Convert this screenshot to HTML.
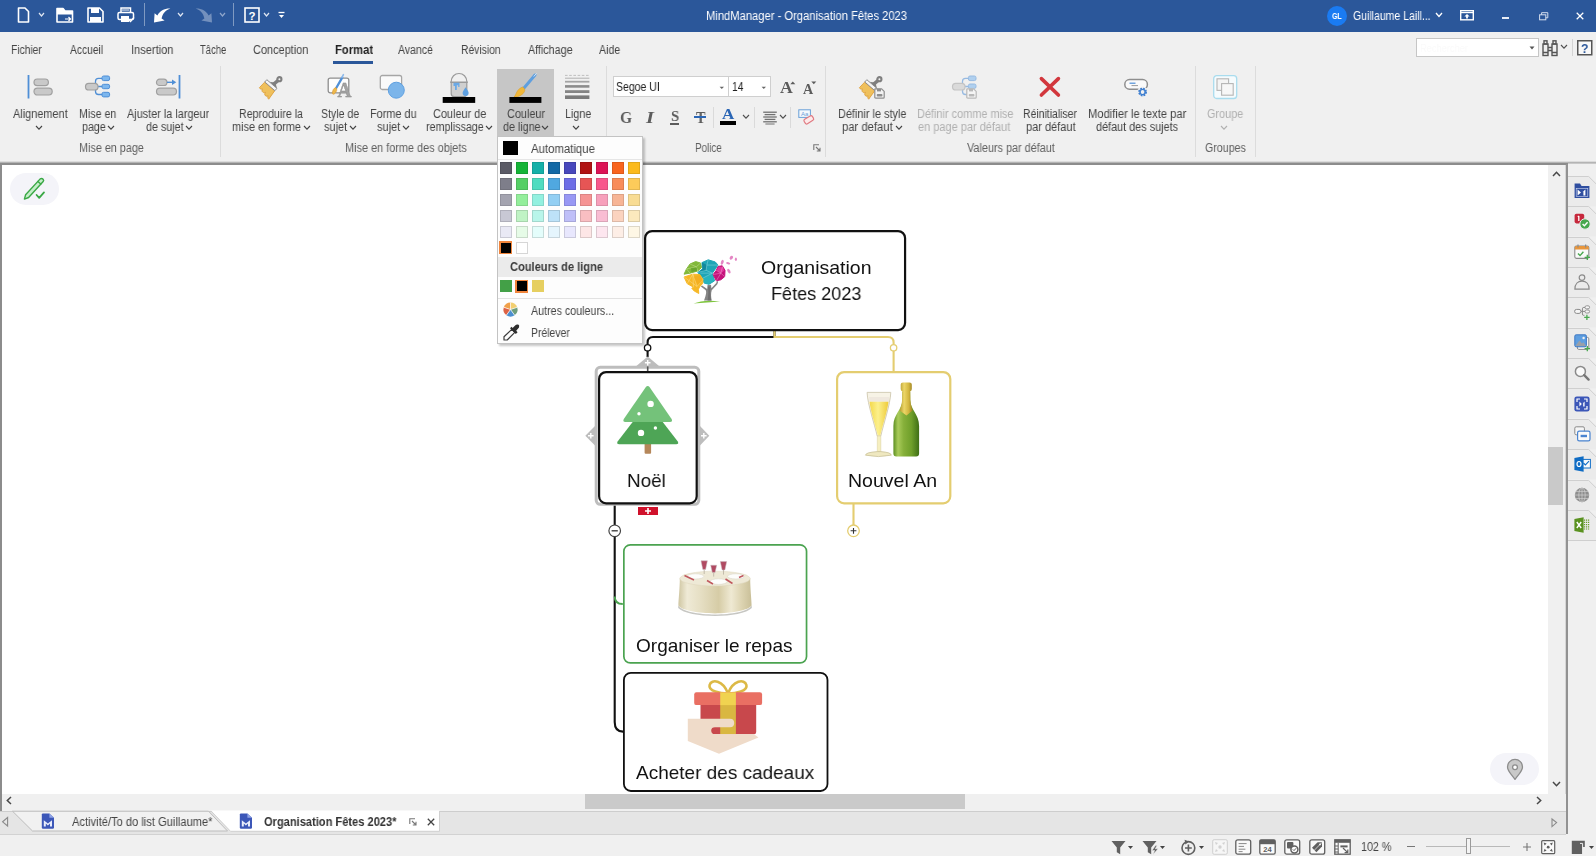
<!DOCTYPE html>
<html lang="fr"><head><meta charset="utf-8"><title>MindManager - Organisation Fêtes 2023</title>
<style>
html,body{margin:0;padding:0;}
body{width:1596px;height:856px;overflow:hidden;position:relative;background:#f0f0f0;font-family:"Liberation Sans",sans-serif;}
.b{position:absolute;box-sizing:border-box;display:block;}
.t{position:absolute;white-space:nowrap;display:block;transform-origin:0 50%;will-change:transform;}
svg{overflow:visible;}
</style></head>
<body>
<!-- title bar -->
<div class="b" style="left:0px;top:0px;width:1596px;height:32.4px;background:#2b579a;"></div>
<svg class="b" style="left:17px;top:7px;" width="13" height="16" viewBox="0 0 13 16"><path d="M1.5 1 H8 L11.5 4.5 V15 H1.5 Z" fill="none" stroke="#fff" stroke-width="1.6" stroke-linejoin="round"/></svg>
<svg class="b" style="left:37.5px;top:11.5px;" width="7" height="5" viewBox="0 0 7 5"><path d="M1 1 L3.5 4 L6 1" fill="none" stroke="#dfe6f2" stroke-width="1.2"/></svg>
<svg class="b" style="left:56px;top:7px;" width="18" height="16" viewBox="0 0 18 16"><path d="M1 1.5 H7 L9 4 H16.5 V15 H1 Z" fill="none" stroke="#fff" stroke-width="1.6" stroke-linejoin="round"/><path d="M1 7.5 H16.5 V4 H9 L7 1.5 H1Z" fill="#fff"/><path d="M9 12 H14.5 M12.5 10 L14.5 12 L12.5 14" stroke="#fff" stroke-width="1.2" fill="none"/></svg>
<svg class="b" style="left:87px;top:7px;" width="17" height="16" viewBox="0 0 17 16"><path d="M1 1 H12.5 L16 4.5 V15 H1 Z" fill="none" stroke="#fff" stroke-width="1.6" stroke-linejoin="round"/><rect x="4" y="1" width="8" height="5" fill="#fff"/><rect x="3" y="10" width="11" height="5" fill="#fff"/></svg>
<svg class="b" style="left:117px;top:7px;" width="18" height="16" viewBox="0 0 18 16"><path d="M4 5.5 V1 H13.5 V5.5" fill="none" stroke="#fff" stroke-width="1.5"/><rect x="1" y="5.5" width="15.5" height="7" rx="1.5" fill="none" stroke="#fff" stroke-width="1.5"/><rect x="4" y="9" width="8" height="6" fill="#fff"/><path d="M5 3 H12" stroke="#fff" stroke-width="1"/><path d="M11.5 12.5 L13.5 14.5 L17 10.5" stroke="#fff" stroke-width="1.5" fill="none"/></svg>
<div class="b" style="left:144px;top:3px;width:1px;height:23px;background:#7f9ac2;"></div>
<svg class="b" style="left:153px;top:7px;" width="18" height="16" viewBox="0 0 18 16"><path d="M1 15.6 L1.6 6.2 L4.4 8.6 C7 3.6 11.4 1.4 17.4 1.6 C12.6 3.2 9.6 6.6 8.6 11.6 L11.6 13.6 Z" fill="#fff"/></svg>
<svg class="b" style="left:177px;top:11.5px;" width="7" height="5" viewBox="0 0 7 5"><path d="M1 1 L3.5 4 L6 1" fill="none" stroke="#dfe6f2" stroke-width="1.2"/></svg>
<svg class="b" style="left:195px;top:7px;" width="18" height="16" viewBox="0 0 18 16"><path d="M17 15.6 L16.4 6.2 L13.6 8.6 C11 3.6 6.6 1.4 0.6 1.6 C5.4 3.2 8.4 6.6 9.4 11.6 L6.4 13.6 Z" fill="#7390bd"/></svg>
<svg class="b" style="left:218.5px;top:11.5px;" width="7" height="5" viewBox="0 0 7 5"><path d="M1 1 L3.5 4 L6 1" fill="none" stroke="#8fa6cb" stroke-width="1.2"/></svg>
<div class="b" style="left:233px;top:3px;width:1px;height:23px;background:#7f9ac2;"></div>
<svg class="b" style="left:244px;top:7px;" width="16" height="16" viewBox="0 0 16 16"><rect x="1" y="1" width="14" height="14" fill="none" stroke="#fff" stroke-width="1.6"/><text x="8" y="12.5" font-size="11.5" font-weight="bold" fill="#fff" text-anchor="middle" font-family="Liberation Sans, sans-serif">?</text></svg>
<svg class="b" style="left:262.5px;top:11.5px;" width="7" height="5" viewBox="0 0 7 5"><path d="M1 1 L3.5 4 L6 1" fill="none" stroke="#dfe6f2" stroke-width="1.2"/></svg>
<svg class="b" style="left:277.5px;top:11px;" width="7" height="8" viewBox="0 0 7 8"><path d="M0.5 1.5 H6.5" stroke="#fff" stroke-width="1.3"/><path d="M1 4 H6 L3.5 7 Z" fill="#fff"/></svg>
<span id="t1" class="t" style="left:706px;top:8.4px;font-size:12px;line-height:17px;color:#fff;font-weight:normal;transform:scaleX(0.9329);">MindManager - Organisation Fêtes 2023</span>
<div class="b" style="left:1327px;top:6px;width:20px;height:20px;background:#1a7bf2;border-radius:50%;"></div>
<span id="t2" class="t" style="left:1332.2px;top:10.4px;font-size:9px;line-height:13px;color:#fff;font-weight:bold;transform:scaleX(0.7760);">GL</span>
<span id="t3" class="t" style="left:1353.3px;top:8.4px;font-size:12px;line-height:17px;color:#fff;font-weight:normal;transform:scaleX(0.8758);">Guillaume Laill...</span>
<svg class="b" style="left:1435px;top:12.25px;" width="8" height="5.5" viewBox="0 0 8 5.5"><path d="M1 1 L4 4.5 L7 1" fill="none" stroke="#fff" stroke-width="1.3"/></svg>
<svg class="b" style="left:1460px;top:9.5px;" width="14" height="10.5" viewBox="0 0 14 10.5"><rect x="0.7" y="0.7" width="12.6" height="9.1" fill="none" stroke="#fff" stroke-width="1.4"/><path d="M0.7 2.6 H13.3" stroke="#fff" stroke-width="1.2"/><path d="M7 4 L9.6 6.6 H7.9 V8.5 H6.1 V6.6 H4.4 Z" fill="#fff"/></svg>
<div class="b" style="left:1502.4px;top:17.3px;width:7px;height:1.3px;background:#e8edf6;"></div>
<svg class="b" style="left:1539px;top:11.5px;" width="9.5" height="8.5" viewBox="0 0 9.5 8.5"><rect x="0.6" y="2.8" width="6.2" height="5" fill="none" stroke="#d5deee" stroke-width="1"/><path d="M2.6 2.8 V0.7 H8.8 V5.8 H6.8" fill="none" stroke="#d5deee" stroke-width="1"/></svg>
<svg class="b" style="left:1576px;top:12px;" width="8" height="8" viewBox="0 0 8 8"><path d="M0.7 0.7 L7.3 7.3 M7.3 0.7 L0.7 7.3" stroke="#fff" stroke-width="1.25"/></svg>
<!-- ribbon tabs -->
<span id="t4" class="t" style="left:11.3px;top:41.9px;font-size:12px;line-height:17px;color:#444;font-weight:normal;transform:scaleX(0.8552);">Fichier</span>
<span id="t5" class="t" style="left:69.7px;top:41.9px;font-size:12px;line-height:17px;color:#444;font-weight:normal;transform:scaleX(0.8556);">Accueil</span>
<span id="t6" class="t" style="left:130.6px;top:41.9px;font-size:12px;line-height:17px;color:#444;font-weight:normal;transform:scaleX(0.9211);">Insertion</span>
<span id="t7" class="t" style="left:199.7px;top:41.9px;font-size:12px;line-height:17px;color:#444;font-weight:normal;transform:scaleX(0.7884);">Tâche</span>
<span id="t8" class="t" style="left:252.6px;top:41.9px;font-size:12px;line-height:17px;color:#444;font-weight:normal;transform:scaleX(0.9124);">Conception</span>
<span id="t9" class="t" style="left:334.6px;top:41.9px;font-size:12px;line-height:17px;color:#222;font-weight:bold;transform:scaleX(0.9368);">Format</span>
<div class="b" style="left:333.3px;top:61px;width:40.2px;height:2.6px;background:#2b579a;"></div>
<span id="t10" class="t" style="left:398.3px;top:41.9px;font-size:12px;line-height:17px;color:#444;font-weight:normal;transform:scaleX(0.8741);">Avancé</span>
<span id="t11" class="t" style="left:460.7px;top:41.9px;font-size:12px;line-height:17px;color:#444;font-weight:normal;transform:scaleX(0.8603);">Révision</span>
<span id="t12" class="t" style="left:527.9px;top:41.9px;font-size:12px;line-height:17px;color:#444;font-weight:normal;transform:scaleX(0.8951);">Affichage</span>
<span id="t13" class="t" style="left:599.3px;top:41.9px;font-size:12px;line-height:17px;color:#444;font-weight:normal;transform:scaleX(0.8863);">Aide</span>
<div class="b" style="left:1416px;top:37.5px;width:122.5px;height:19.5px;background:#fff;border:1px solid #c6c6c6;"></div>
<span id="t14" class="t" style="left:1420px;top:39.9px;font-size:11.5px;line-height:16px;color:#fafafa;font-weight:normal;transform:scaleX(0.8074);">Rechercher</span>
<svg class="b" style="left:1529px;top:45.5px;" width="6" height="4" viewBox="0 0 6 4"><path d="M0.5 0.5 H5.5 L3 3.5 Z" fill="#555"/></svg>
<svg class="b" style="left:1542px;top:39.5px;" width="16" height="16.5" viewBox="0 0 16 16.5"><g fill="none" stroke="#555" stroke-width="1.4"><rect x="1" y="4" width="5" height="11.5"/><rect x="10" y="4" width="5" height="11.5"/><rect x="2" y="0.8" width="3" height="3.2"/><rect x="11" y="0.8" width="3" height="3.2"/><path d="M6 7.5 H10 M6 10.5 H10 M1 12.5 H6 M10 12.5 H15"/></g></svg>
<svg class="b" style="left:1559.5px;top:43.9px;" width="8" height="5.2" viewBox="0 0 8 5.2"><path d="M1 1 L4 4.2 L7 1" fill="none" stroke="#505050" stroke-width="1.15"/></svg>
<div class="b" style="left:1571.5px;top:39px;width:1px;height:17px;background:#d4d4d4;"></div>
<svg class="b" style="left:1577px;top:40px;" width="15.5" height="15.5" viewBox="0 0 15.5 15.5"><rect x="0.75" y="0.75" width="14" height="14" fill="#f8f8f8" stroke="#555" stroke-width="1.5"/></svg>
<span id="t15" class="t" style="left:1581.2px;top:39.9px;font-size:12.5px;line-height:18px;color:#2b579a;font-weight:bold;transform:scaleX(0.9685);">?</span>
<!-- ribbon body -->
<div class="b" style="left:0px;top:160.6px;width:1596px;height:1.4px;background:#dcdcdc;"></div>
<div class="b" style="left:0px;top:162px;width:1596px;height:1.4px;background:#b4b4b4;"></div>
<div class="b" style="left:0px;top:163.4px;width:1567.8px;height:1.6px;background:#8c8c8c;"></div>
<div class="b" style="left:1567.8px;top:163.4px;width:28.2px;height:1.6px;background:#c8c8c8;"></div>
<div class="b" style="left:220px;top:66px;width:1px;height:91px;background:#dcdcdc;"></div>
<div class="b" style="left:606px;top:66px;width:1px;height:91px;background:#dcdcdc;"></div>
<div class="b" style="left:825px;top:66px;width:1px;height:91px;background:#dcdcdc;"></div>
<div class="b" style="left:1195px;top:66px;width:1px;height:91px;background:#dcdcdc;"></div>
<div class="b" style="left:1255px;top:66px;width:1px;height:91px;background:#dcdcdc;"></div>
<div class="b" style="left:497.3px;top:68.8px;width:56.4px;height:67px;background:#c6c6c6;"></div>
<span id="t16" class="t" style="left:12.5px;top:105.9px;font-size:12px;line-height:17px;color:#444;font-weight:normal;transform:scaleX(0.9110);">Alignement</span>
<svg class="b" style="left:34.8px;top:124.7px;" width="8" height="5.2" viewBox="0 0 8 5.2"><path d="M1 1 L4 4.2 L7 1" fill="none" stroke="#444" stroke-width="1.15"/></svg>
<span id="t17" class="t" style="left:78.7px;top:105.9px;font-size:12px;line-height:17px;color:#444;font-weight:normal;transform:scaleX(0.8874);">Mise en</span>
<span id="t18" class="t" style="left:81.5px;top:119.4px;font-size:12px;line-height:17px;color:#444;font-weight:normal;transform:scaleX(0.8913);">page</span>
<svg class="b" style="left:106.7px;top:125px;" width="8" height="5.2" viewBox="0 0 8 5.2"><path d="M1 1 L4 4.2 L7 1" fill="none" stroke="#444" stroke-width="1.15"/></svg>
<span id="t19" class="t" style="left:127.3px;top:105.9px;font-size:12px;line-height:17px;color:#444;font-weight:normal;transform:scaleX(0.9061);">Ajuster la largeur</span>
<span id="t20" class="t" style="left:146px;top:119.4px;font-size:12px;line-height:17px;color:#444;font-weight:normal;transform:scaleX(0.8922);">de sujet</span>
<svg class="b" style="left:185px;top:125px;" width="8" height="5.2" viewBox="0 0 8 5.2"><path d="M1 1 L4 4.2 L7 1" fill="none" stroke="#444" stroke-width="1.15"/></svg>
<span id="t21" class="t" style="left:78.7px;top:139.9px;font-size:12px;line-height:17px;color:#5e5e5e;font-weight:normal;transform:scaleX(0.9008);">Mise en page</span>
<span id="t22" class="t" style="left:239.3px;top:105.9px;font-size:12px;line-height:17px;color:#444;font-weight:normal;transform:scaleX(0.8883);">Reproduire la</span>
<span id="t23" class="t" style="left:231.8px;top:119.4px;font-size:12px;line-height:17px;color:#444;font-weight:normal;transform:scaleX(0.9075);">mise en forme</span>
<svg class="b" style="left:303px;top:125px;" width="8" height="5.2" viewBox="0 0 8 5.2"><path d="M1 1 L4 4.2 L7 1" fill="none" stroke="#444" stroke-width="1.15"/></svg>
<span id="t24" class="t" style="left:320.8px;top:105.9px;font-size:12px;line-height:17px;color:#444;font-weight:normal;transform:scaleX(0.8810);">Style de</span>
<span id="t25" class="t" style="left:323.8px;top:119.4px;font-size:12px;line-height:17px;color:#444;font-weight:normal;transform:scaleX(0.9148);">sujet</span>
<svg class="b" style="left:348.5px;top:125px;" width="8" height="5.2" viewBox="0 0 8 5.2"><path d="M1 1 L4 4.2 L7 1" fill="none" stroke="#444" stroke-width="1.15"/></svg>
<span id="t26" class="t" style="left:369.7px;top:105.9px;font-size:12px;line-height:17px;color:#444;font-weight:normal;transform:scaleX(0.9073);">Forme du</span>
<span id="t27" class="t" style="left:376.7px;top:119.4px;font-size:12px;line-height:17px;color:#444;font-weight:normal;transform:scaleX(0.9188);">sujet</span>
<svg class="b" style="left:402px;top:125px;" width="8" height="5.2" viewBox="0 0 8 5.2"><path d="M1 1 L4 4.2 L7 1" fill="none" stroke="#444" stroke-width="1.15"/></svg>
<span id="t28" class="t" style="left:432.6px;top:105.9px;font-size:12px;line-height:17px;color:#444;font-weight:normal;transform:scaleX(0.9094);">Couleur de</span>
<span id="t29" class="t" style="left:426.3px;top:119.4px;font-size:12px;line-height:17px;color:#444;font-weight:normal;transform:scaleX(0.8918);">remplissage</span>
<svg class="b" style="left:484.7px;top:125px;" width="8" height="5.2" viewBox="0 0 8 5.2"><path d="M1 1 L4 4.2 L7 1" fill="none" stroke="#444" stroke-width="1.15"/></svg>
<span id="t30" class="t" style="left:506.5px;top:105.9px;font-size:12px;line-height:17px;color:#444;font-weight:normal;transform:scaleX(0.9065);">Couleur</span>
<span id="t31" class="t" style="left:502.8px;top:119.4px;font-size:12px;line-height:17px;color:#444;font-weight:normal;transform:scaleX(0.8942);">de ligne</span>
<svg class="b" style="left:541.3px;top:125px;" width="8" height="5.2" viewBox="0 0 8 5.2"><path d="M1 1 L4 4.2 L7 1" fill="none" stroke="#444" stroke-width="1.15"/></svg>
<span id="t32" class="t" style="left:564.7px;top:105.9px;font-size:12px;line-height:17px;color:#444;font-weight:normal;transform:scaleX(0.8953);">Ligne</span>
<svg class="b" style="left:572.2px;top:124.7px;" width="8" height="5.2" viewBox="0 0 8 5.2"><path d="M1 1 L4 4.2 L7 1" fill="none" stroke="#444" stroke-width="1.15"/></svg>
<span id="t33" class="t" style="left:344.6px;top:139.9px;font-size:12px;line-height:17px;color:#5e5e5e;font-weight:normal;transform:scaleX(0.9085);">Mise en forme des objets</span>
<span id="t34" class="t" style="left:695.2px;top:139.9px;font-size:12px;line-height:17px;color:#5e5e5e;font-weight:normal;transform:scaleX(0.8199);">Police</span>
<span id="t35" class="t" style="left:837.6px;top:105.9px;font-size:12px;line-height:17px;color:#444;font-weight:normal;transform:scaleX(0.9077);">Définir le style</span>
<span id="t36" class="t" style="left:842px;top:119.4px;font-size:12px;line-height:17px;color:#444;font-weight:normal;transform:scaleX(0.9381);">par defaut</span>
<svg class="b" style="left:894.5px;top:125px;" width="8" height="5.2" viewBox="0 0 8 5.2"><path d="M1 1 L4 4.2 L7 1" fill="none" stroke="#444" stroke-width="1.15"/></svg>
<span id="t37" class="t" style="left:916.5px;top:105.9px;font-size:12px;line-height:17px;color:#b0b0b0;font-weight:normal;transform:scaleX(0.9101);">Définir comme mise</span>
<span id="t38" class="t" style="left:917.8px;top:119.4px;font-size:12px;line-height:17px;color:#b0b0b0;font-weight:normal;transform:scaleX(0.9150);">en page par défaut</span>
<span id="t39" class="t" style="left:1023px;top:105.9px;font-size:12px;line-height:17px;color:#444;font-weight:normal;transform:scaleX(0.8705);">Réinitialiser</span>
<span id="t40" class="t" style="left:1025.6px;top:119.4px;font-size:12px;line-height:17px;color:#444;font-weight:normal;transform:scaleX(0.9177);">par défaut</span>
<span id="t41" class="t" style="left:1087.7px;top:105.9px;font-size:12px;line-height:17px;color:#444;font-weight:normal;transform:scaleX(0.9327);">Modifier le texte par</span>
<span id="t42" class="t" style="left:1095.7px;top:119.4px;font-size:12px;line-height:17px;color:#444;font-weight:normal;transform:scaleX(0.9037);">défaut des sujets</span>
<span id="t43" class="t" style="left:967.2px;top:139.9px;font-size:12px;line-height:17px;color:#5e5e5e;font-weight:normal;transform:scaleX(0.9036);">Valeurs par défaut</span>
<span id="t44" class="t" style="left:1206.9px;top:105.9px;font-size:12px;line-height:17px;color:#b0b0b0;font-weight:normal;transform:scaleX(0.9068);">Groupe</span>
<svg class="b" style="left:1220px;top:124.7px;" width="8" height="5.2" viewBox="0 0 8 5.2"><path d="M1 1 L4 4.2 L7 1" fill="none" stroke="#b0b0b0" stroke-width="1.15"/></svg>
<span id="t45" class="t" style="left:1205.4px;top:139.9px;font-size:12px;line-height:17px;color:#5e5e5e;font-weight:normal;transform:scaleX(0.8885);">Groupes</span>
<!-- ribbon icons -->
<svg class="b" style="left:26px;top:73px;" width="30" height="28" viewBox="0 0 30 28"><path d="M2.5 2 V25.5" stroke="#4f8fd6" stroke-width="1.8"/><rect x="8" y="6" width="14.4" height="6.6" rx="3.3" fill="#c9c9c9" stroke="#a0a0a0" stroke-width="1.2"/><rect x="8" y="15.2" width="18.2" height="6.8" rx="3.4" fill="#c9c9c9" stroke="#a0a0a0" stroke-width="1.2"/></svg>
<svg class="b" style="left:84px;top:73px;" width="28" height="28" viewBox="0 0 28 28"><path d="M18 5.3 H14.5 Q11.5 5.3 11.5 8.3 V18.5 Q11.5 21.5 14.5 21.5 H18 M11.5 13.5 H18" fill="none" stroke="#4f8fd6" stroke-width="1.3"/><rect x="1.5" y="10.3" width="12.5" height="6.7" rx="3.3" fill="#c9c9c9" stroke="#a0a0a0" stroke-width="1.2"/><g fill="#7db7ee" stroke="#4f8fd6" stroke-width="1"><rect x="18" y="3" width="7.6" height="4.6" rx="1.6"/><rect x="18" y="11.3" width="7.6" height="4.4" rx="1.6"/><rect x="18" y="19.3" width="7.6" height="4.6" rx="1.6"/></g></svg>
<svg class="b" style="left:154px;top:73px;" width="30" height="28" viewBox="0 0 30 28"><path d="M25.5 2 V25.5" stroke="#4f8fd6" stroke-width="1.8"/><rect x="2.5" y="6.2" width="10.4" height="6.3" rx="3.1" fill="#c9c9c9" stroke="#a0a0a0" stroke-width="1.2"/><rect x="2.5" y="15.2" width="20" height="6.8" rx="3.4" fill="#c9c9c9" stroke="#a0a0a0" stroke-width="1.2"/><path d="M13 9.3 H19" stroke="#4f8fd6" stroke-width="1.4"/><path d="M18 6.6 L22.3 9.3 L18 12 Z" fill="#4f8fd6"/></svg>
<svg class="b" style="left:258.8px;top:74.5px;" width="24" height="25" viewBox="0 0 24 25"><g>
<circle cx="20.4" cy="4.2" r="2.05" fill="none" stroke="#7f7f7f" stroke-width="2.1"/>
<path d="M19 5.5 L14.2 9.6" stroke="#7f7f7f" stroke-width="3.5"/>
<path d="M16.8 9 L18 13.4 L10.4 6.8 L15 7.4Z" fill="#7f7f7f"/>
<path d="M5.6 7.2 L15.6 15.9 L9.7 24.2 C8.7 23.2 8.5 22 9.1 20.8 C7.7 21.6 6.5 21.2 5.9 20 C5.5 19 5.9 18 6.5 17.4 C5.1 18 3.9 17.6 3.3 16.6 C2.7 15.6 3.1 14.6 3.7 14 C2.3 14.4 0.9 14 0.4 12.7 Z" fill="#efc05c" stroke="#dc9f3c" stroke-width="0.9" stroke-linejoin="round"/>
<path d="M7.8 4.7 L17.9 13.4 L15.9 15.7 L5.8 7 Z" fill="#f4f4f4" stroke="#858585" stroke-width="0.9" stroke-linejoin="round"/>
</g></svg>
<svg class="b" style="left:326px;top:73px;" width="28" height="27" viewBox="0 0 28 27"><rect x="2.2" y="5.2" width="20.6" height="14.6" rx="2" fill="#fdfdfd" stroke="#8e8e8e" stroke-width="1.3"/><g transform="translate(11.6 0) scale(0.9 1)"><text x="0" y="23.8" font-family="Liberation Serif, serif" font-size="21.5" font-weight="bold" fill="#a2a2a2" stroke="#8a8a8a" stroke-width="0.4">A</text></g><path d="M16.2 4.6 L10.2 15" stroke="#4f8fd6" stroke-width="2.3" stroke-linecap="round"/><path d="M17.4 1.6 L16 4.4" stroke="#8db9ea" stroke-width="1.6" stroke-linecap="round"/><path d="M9.6 14.6 C11.6 16 10.8 19 8.2 21 C6.8 21.6 6.2 21 6.4 19.6 C6.6 17.4 7.6 15.2 9.6 14.6Z" fill="#edb84a" stroke="#d8962e" stroke-width="0.6"/></svg>
<svg class="b" style="left:379px;top:73px;" width="28" height="28" viewBox="0 0 28 28"><rect x="1.3" y="2.5" width="21.3" height="14" rx="2" fill="#fafafa" stroke="#a6a6a6" stroke-width="1.3"/><circle cx="17.3" cy="17.2" r="8" fill="#7cb5ea" stroke="#5d9fe0" stroke-width="1"/></svg>
<svg class="b" style="left:442px;top:72px;" width="34" height="32" viewBox="0 0 34 32"><path d="M9 10.5 C9 -1.5 25 -1.5 25 10.5" fill="none" stroke="#9a9a9a" stroke-width="1.2"/>
<path d="M8.2 9.5 H25.8 V10.8 H8.2Z" fill="#9a9a9a"/>
<path d="M9.2 10.5 H24.8 V21.5 Q24.8 24.6 21.8 24.6 H12.2 Q9.2 24.6 9.2 21.5 Z" fill="#cfcfcf" stroke="#9a9a9a" stroke-width="1.2"/>
<path d="M11.5 10.8 H17.5 V15 H16.2 V13.2 H14.8 V18 H13 V14 H11.5 Z" fill="#6aa9e6"/>
<path d="M23.6 15.2 C25.6 18 26.6 19.6 26.6 21 A3 3 0 0 1 20.6 21 C20.6 19.6 21.6 18 23.6 15.2Z" fill="#5d9fe0"/>
<rect x="0.7" y="25" width="32.5" height="5.9" fill="#000"/></svg>
<svg class="b" style="left:508px;top:72px;" width="36" height="32" viewBox="0 0 36 32"><path d="M27 3 L15.8 16.3" stroke="#5f9fdf" stroke-width="3" stroke-linecap="round"/>
<path d="M26 4.2 L28.3 1.6" stroke="#cfe3f7" stroke-width="1" stroke-linecap="round"/>
<path d="M14.6 15 C17.6 16.6 17.6 19.6 14 22.5 C11 24.8 7.5 25.3 6 25 C8.6 22.6 8 17.5 14.6 15Z" fill="#f0b73a" stroke="#d99a23" stroke-width="0.5"/>
<rect x="1.4" y="25" width="32" height="5.9" fill="#000"/></svg>
<svg class="b" style="left:564px;top:73px;" width="27" height="28" viewBox="0 0 27 28"><path d="M1 2.4 H25.4" stroke="#b9b9b9" stroke-width="0.9" stroke-dasharray="2.6 1.6"/><path d="M1 5.2 H25.4" stroke="#b0b0b0" stroke-width="1"/><path d="M1 8.7 H25.4" stroke="#a4a4a4" stroke-width="1.8"/><path d="M1 13.4 H25.4" stroke="#8c8c8c" stroke-width="2.6"/><path d="M1 18.6 H25.4" stroke="#858585" stroke-width="2.8"/><path d="M1 24.2 H25.4" stroke="#7b7b7b" stroke-width="3.6"/></svg>
<div class="b" style="left:613px;top:76px;width:115.5px;height:20.5px;background:#fff;border:1px solid #cfcfcf;"></div>
<span id="t46" class="t" style="left:615.6px;top:79.4px;font-size:12px;line-height:17px;color:#222;font-weight:normal;transform:scaleX(0.8752);">Segoe UI</span>
<svg class="b" style="left:719px;top:85.5px;" width="6" height="4" viewBox="0 0 6 4"><path d="M0.6 0.7 H5 L2.8 3.1 Z" fill="#666"/></svg>
<div class="b" style="left:728.2px;top:76px;width:43px;height:20.5px;background:#fff;border:1px solid #cfcfcf;"></div>
<span id="t47" class="t" style="left:731.6px;top:79.4px;font-size:12px;line-height:17px;color:#222;font-weight:normal;transform:scaleX(0.8533);">14</span>
<svg class="b" style="left:761.2px;top:85.5px;" width="6" height="4" viewBox="0 0 6 4"><path d="M0.6 0.7 H5 L2.8 3.1 Z" fill="#666"/></svg>
<span id="t48" class="t" style="left:780.2px;top:76.2px;font-size:17px;line-height:24px;color:#5c5c5c;font-weight:bold;transform:scaleX(1.0422);font-family:'Liberation Serif',serif;">A</span>
<svg class="b" style="left:789.8px;top:80.5px;" width="6" height="4" viewBox="0 0 6 4"><path d="M0.3 3.3 H5.3 L2.8 0.5 Z" fill="#5c5c5c"/></svg>
<span id="t49" class="t" style="left:802.8px;top:80.2px;font-size:14px;line-height:20px;color:#5c5c5c;font-weight:bold;transform:scaleX(1.0074);font-family:'Liberation Serif',serif;">A</span>
<svg class="b" style="left:811.2px;top:80.5px;" width="6" height="4" viewBox="0 0 6 4"><path d="M0.3 0.5 H5.3 L2.8 3.3 Z" fill="#5c5c5c"/></svg>
<span id="t50" class="t" style="left:619.9px;top:105.4px;font-size:17.5px;line-height:24px;color:#5c5c5c;font-weight:bold;transform:scaleX(0.8881);font-family:'Liberation Serif',serif;">G</span>
<span id="t51" class="t" style="left:645.6px;top:105.4px;font-size:17.5px;line-height:24px;color:#5c5c5c;font-weight:bold;transform:scaleX(1.1743);font-family:'Liberation Serif',serif;font-style:italic;">I</span>
<span id="t52" class="t" style="left:670.6px;top:105.2px;font-size:15.5px;line-height:22px;color:#5c5c5c;font-weight:bold;transform:scaleX(0.9507);font-family:'Liberation Serif',serif;">S</span>
<div class="b" style="left:670.3px;top:123.2px;width:8.8px;height:1.6px;background:#5c5c5c;"></div>
<span id="t53" class="t" style="left:695.6px;top:105.9px;font-size:16.5px;line-height:23px;color:#5c5c5c;font-weight:bold;transform:scaleX(0.8533);font-family:'Liberation Serif',serif;">T</span>
<div class="b" style="left:694.3px;top:116.3px;width:11.8px;height:1.5px;background:#2b66b5;"></div>
<div class="b" style="left:713.3px;top:106.5px;width:1px;height:21.5px;background:#dadada;"></div>
<span id="t54" class="t" style="left:722.4px;top:103.2px;font-size:15.5px;line-height:22px;color:#2b66b5;font-weight:bold;transform:scaleX(1.0979);font-family:'Liberation Serif',serif;">A</span>
<div class="b" style="left:720.3px;top:121.3px;width:16px;height:3.9px;background:#000;"></div>
<svg class="b" style="left:741.8px;top:113.8px;" width="8" height="5.2" viewBox="0 0 8 5.2"><path d="M1 1 L4 4.2 L7 1" fill="none" stroke="#505050" stroke-width="1.15"/></svg>
<div class="b" style="left:754.3px;top:106.5px;width:1px;height:21.5px;background:#dadada;"></div>
<svg class="b" style="left:762px;top:111px;" width="16" height="14" viewBox="0 0 16 14"><g stroke="#707070" stroke-width="1.3"><path d="M1.2 1.2 H14.8"/><path d="M2.6 3.6 H13.4"/><path d="M1.2 6 H14.8"/><path d="M2.6 8.4 H13.4"/><path d="M1.2 10.8 H14.8"/><path d="M3.4 13 H12.6" stroke-width="1"/></g></svg>
<svg class="b" style="left:778.7px;top:113.8px;" width="8" height="5.2" viewBox="0 0 8 5.2"><path d="M1 1 L4 4.2 L7 1" fill="none" stroke="#505050" stroke-width="1.15"/></svg>
<div class="b" style="left:790.3px;top:106.5px;width:1px;height:21.5px;background:#dadada;"></div>
<svg class="b" style="left:797.5px;top:109px;" width="17" height="16" viewBox="0 0 17 16"><rect x="0.8" y="0.8" width="11.6" height="7.6" fill="#f4f8fc" stroke="#6aa0d8" stroke-width="1"/><text x="6.6" y="6.9" font-size="6" fill="#6aa0d8" text-anchor="middle" font-family="Liberation Sans, sans-serif">Aa</text><rect x="6" y="8.2" width="9.6" height="5.2" rx="1.6" transform="rotate(-32 10.8 10.8)" fill="#fdeaea" stroke="#e07a82" stroke-width="1.2"/></svg>
<svg class="b" style="left:812.8px;top:143.8px;" width="8" height="8" viewBox="0 0 8 8"><path d="M0.8 6 V0.8 H6" fill="none" stroke="#777" stroke-width="1.1"/><path d="M3 3 L7 7 M7 3.8 V7 H3.8" fill="none" stroke="#777" stroke-width="1.1"/></svg>
<svg class="b" style="left:859.4px;top:74.5px;" width="24" height="25" viewBox="0 0 24 25"><g>
<circle cx="20.4" cy="4.2" r="2.05" fill="none" stroke="#7f7f7f" stroke-width="2.1"/>
<path d="M19 5.5 L14.2 9.6" stroke="#7f7f7f" stroke-width="3.5"/>
<path d="M16.8 9 L18 13.4 L10.4 6.8 L15 7.4Z" fill="#7f7f7f"/>
<path d="M5.6 7.2 L15.6 15.9 L9.7 24.2 C8.7 23.2 8.5 22 9.1 20.8 C7.7 21.6 6.5 21.2 5.9 20 C5.5 19 5.9 18 6.5 17.4 C5.1 18 3.9 17.6 3.3 16.6 C2.7 15.6 3.1 14.6 3.7 14 C2.3 14.4 0.9 14 0.4 12.7 Z" fill="#efc05c" stroke="#dc9f3c" stroke-width="0.9" stroke-linejoin="round"/>
<path d="M7.8 4.7 L17.9 13.4 L15.9 15.7 L5.8 7 Z" fill="#f4f4f4" stroke="#858585" stroke-width="0.9" stroke-linejoin="round"/>
</g></svg>
<svg class="b" style="left:873.6px;top:88.2px;" width="11" height="11" viewBox="0 0 11 11"><path d="M1.2 0.8 H7.6 L10.2 3.4 V9.2 Q10.2 10.2 9.2 10.2 H1.8 Q0.8 10.2 0.8 9.2 V1.2 Z" fill="#f2f2f2" stroke="#8e8e8e" stroke-width="1.2"/><rect x="3" y="0.8" width="4" height="2.6" fill="#8e8e8e"/><rect x="2.8" y="6" width="5.6" height="2.6" rx="0.8" fill="#8e8e8e"/></svg>
<svg class="b" style="left:951px;top:73px;" width="28" height="28" viewBox="0 0 28 28"><g opacity="0.55"><path d="M18 5.3 H14.5 Q11.5 5.3 11.5 8.3 V18.5 Q11.5 21.5 14.5 21.5 H16 M11.5 13.5 H18" fill="none" stroke="#4f8fd6" stroke-width="1.3"/><rect x="1.5" y="10.3" width="12.5" height="6.7" rx="3.3" fill="#c9c9c9" stroke="#a0a0a0" stroke-width="1.2"/><g fill="#7db7ee" stroke="#4f8fd6" stroke-width="1"><rect x="17.4" y="3" width="7.6" height="4.6" rx="1.6"/><rect x="17.4" y="11" width="7.6" height="4.4" rx="1.6"/></g></g></svg>
<svg class="b" style="left:965.6px;top:88.2px;" width="11" height="11" viewBox="0 0 11 11"><path d="M1.2 0.8 H7.6 L10.2 3.4 V9.2 Q10.2 10.2 9.2 10.2 H1.8 Q0.8 10.2 0.8 9.2 V1.2 Z" fill="#f4f4f4" stroke="#b9b9b9" stroke-width="1.2"/><rect x="3" y="0.8" width="4" height="2.6" fill="#b9b9b9"/><rect x="2.8" y="6" width="5.6" height="2.6" rx="0.8" fill="#b9b9b9"/></svg>
<svg class="b" style="left:1038px;top:75px;" width="24" height="24" viewBox="0 0 24 24"><path d="M3.4 3.6 L20.4 20 M20.4 3.6 L3.4 20" stroke="#d2373d" stroke-width="3.6" stroke-linecap="round"/></svg>
<svg class="b" style="left:1123px;top:77px;" width="28" height="22" viewBox="0 0 28 22"><rect x="1.8" y="2.6" width="22.6" height="9.6" rx="4.8" fill="#fafafa" stroke="#8e8e8e" stroke-width="1.5"/><path d="M6.5 6.2 H12.5" stroke="#4f8fd6" stroke-width="1.2"/><path d="M8.5 8.6 H15" stroke="#9a9a9a" stroke-width="1"/><circle cx="19.6" cy="15" r="5.4" fill="#f0f0f0"/><circle cx="19.6" cy="15" r="3.3" fill="none" stroke="#3f7fd0" stroke-width="2.2" stroke-dasharray="1.6 1"/><circle cx="19.6" cy="15" r="2.6" fill="none" stroke="#3f7fd0" stroke-width="1.4"/></svg>
<svg class="b" style="left:1213px;top:74.6px;" width="24.4" height="24.2" viewBox="0 0 24.4 24.2"><rect x="0.7" y="0.7" width="23" height="22.8" rx="3" fill="#f6fbfd" stroke="#a9dcee" stroke-width="1.3"/><rect x="4" y="3.8" width="11.6" height="11.6" fill="#f4f4f4" stroke="#b5b5b5" stroke-width="1.1"/><rect x="8.6" y="8.6" width="11.6" height="11.6" fill="#f7f7f7" stroke="#b5b5b5" stroke-width="1.1"/></svg>
<!-- canvas -->
<div class="b" style="left:0px;top:165px;width:1568px;height:646px;background:#fff;"></div>
<div class="b" style="left:0px;top:164px;width:1.7px;height:647px;background:#8c8c8c;"></div>
<div class="b" style="left:1547.7px;top:165px;width:17.8px;height:629px;background:#f0f0f0;"></div>
<div class="b" style="left:1565px;top:165px;width:1px;height:669px;background:#d6d6d6;"></div>
<div class="b" style="left:1566px;top:164px;width:2px;height:670px;background:#929292;"></div>
<svg class="b" style="left:1551.5px;top:170.5px;" width="9" height="6" viewBox="0 0 9 6"><path d="M1 5 L4.5 1.3 L8 5" fill="none" stroke="#484848" stroke-width="1.5"/></svg>
<svg class="b" style="left:1551.5px;top:780.5px;" width="9" height="6" viewBox="0 0 9 6"><path d="M1 1 L4.5 4.7 L8 1" fill="none" stroke="#484848" stroke-width="1.5"/></svg>
<div class="b" style="left:1548.2px;top:447px;width:15px;height:57.6px;background:#c9c9c9;"></div>
<div class="b" style="left:1.7px;top:793.6px;width:1564px;height:17.6px;background:#f0f0f0;"></div>
<svg class="b" style="left:5.5px;top:796px;" width="6" height="9" viewBox="0 0 6 9"><path d="M5 1 L1.3 4.5 L5 8" fill="none" stroke="#484848" stroke-width="1.5"/></svg>
<svg class="b" style="left:1535.5px;top:796px;" width="6" height="9" viewBox="0 0 6 9"><path d="M1 1 L4.7 4.5 L1 8" fill="none" stroke="#484848" stroke-width="1.5"/></svg>
<div class="b" style="left:585px;top:793.8px;width:379.5px;height:15px;background:#cacaca;"></div>
<div class="b" style="left:9.8px;top:173.2px;width:49.4px;height:31.8px;background:#f4f4f9;border-radius:15.9px;"></div>
<svg class="b" style="left:23px;top:178px;" width="24" height="24" viewBox="0 0 24 24"><g fill="none" stroke="#3aa845" stroke-width="1.4" stroke-linejoin="round" stroke-linecap="round"><path d="M17.2 0.9 Q18.9 0 20.1 1.3 Q21.2 2.6 20.2 3.5 L5.6 19.5 L1.4 21.1 L2.6 16.8 Z" fill="#c4eec9"/><path d="M14.9 3.4 L17.8 6"/><path d="M13.6 17 L16.2 19.8 L21 14.4" stroke-width="1.8"/></g></svg>
<div class="b" style="left:1490.3px;top:753.4px;width:48.9px;height:31.7px;background:#f4f4f9;border-radius:15.9px;"></div>
<svg class="b" style="left:1506px;top:757.6px;" width="18" height="23" viewBox="0 0 18 23"><path d="M9 1.4 A7.5 7.5 0 0 1 16.5 8.9 C16.5 13.2 12 16.8 9 21.4 C6 16.8 1.5 13.2 1.5 8.9 A7.5 7.5 0 0 1 9 1.4Z" fill="#c9c9c9" stroke="#8d8d8d" stroke-width="1.3" stroke-linejoin="round"/><circle cx="9" cy="9.3" r="2.4" fill="#fff" stroke="#8d8d8d" stroke-width="1.3"/></svg>
<svg class="b" style="left:560px;top:320px;" width="420" height="480" viewBox="0 0 420 480">
<g fill="none" stroke-width="2.1">
<path d="M214.5 10 V17 H93 Q87.6 17 87.6 22.5 V24.5" stroke="#111"/>
<path d="M214.5 10 V17 H328 Q333.6 17 333.6 22.5 V24.5" stroke="#e4cd70"/>
<path d="M333.6 31 V51" stroke="#e4cd70"/>
<path d="M87.6 31 V37" stroke="#111"/>
<path d="M293.5 183 V205" stroke="#e4cd70"/>
<path d="M54.7 184 V402 Q54.7 411.6 63 411.6" stroke="#111"/>
<path d="M54.7 276.5 Q54.7 284 62.8 284" stroke="#4ba350" stroke-width="1.9"/>
</g>
<circle cx="87.6" cy="27.8" r="3.2" fill="#fff" stroke="#111" stroke-width="1.3"/>
<circle cx="333.6" cy="27.8" r="3.2" fill="#fff" stroke="#e4cd70" stroke-width="1.3"/>
<circle cx="54.7" cy="210.8" r="5.8" fill="#fff" stroke="#444" stroke-width="1.2"/>
<path d="M51.6 210.8 H57.8" stroke="#333" stroke-width="1.3"/>
<circle cx="293.5" cy="210.8" r="5.8" fill="#fff" stroke="#e4cd70" stroke-width="1.3"/>
<path d="M290.6 210.8 H296.4 M293.5 207.9 V213.7" stroke="#333" stroke-width="1.1"/>
</svg>
<svg class="b" style="left:643.6px;top:230px;" width="262.2" height="101.2" viewBox="0 0 262.2 101.2"><rect x="1.1" y="1.1" width="260" height="99" rx="7" fill="#fff" stroke="#111" stroke-width="2.2"/></svg>
<span id="t55" class="t" style="left:760.8px;top:254px;font-size:19px;line-height:27px;color:#111;font-weight:normal;transform:scaleX(1.0257);">Organisation</span>
<span id="t56" class="t" style="left:770.9px;top:280.2px;font-size:19px;line-height:27px;color:#111;font-weight:normal;transform:scaleX(0.9508);">Fêtes 2023</span>
<svg class="b" style="left:676px;top:250px;" width="70" height="60" viewBox="0 0 999 856">
<path d="M250 765 Q400 700 630 735 Q450 745 250 765Z" fill="#7fc63f"/>
<path d="M400 720 C430 640 440 590 420 570 L355 520 L372 505 L445 555 L450 500 L500 495 L505 545 L575 470 L585 440 L602 452 L590 490 L510 575 C495 620 500 680 510 720 Z" fill="#858585"/>
<path d="M450 720 C465 640 465 590 455 520 L490 520 C485 600 490 680 505 720Z" fill="#6f6f6f"/>
<path d="M115 345 L150 270 L200 200 L280 165 L350 185 L365 250 L310 300 L200 330 Z" fill="#82b83a" stroke="#82b83a" stroke-width="14" stroke-linejoin="round"/>
<path d="M200 200 L290 240 L350 185 M290 240 L310 300 M150 270 L290 240 M150 270 L200 330" stroke="#c9e59a" stroke-width="7" fill="none"/>
<path d="M215 255 L300 250 L300 300 L220 315Z" fill="#5f9d2b" opacity="0.7"/>
<path d="M370 180 L460 140 L560 170 L600 215 L520 330 L550 440 L470 490 L400 470 L385 400 L310 320 L380 270 Z" fill="#1fa5b6" stroke="#1fa5b6" stroke-width="14" stroke-linejoin="round"/>
<path d="M370 180 L440 215 L430 290 L310 320 L380 270Z" fill="#12889c"/>
<path d="M385 400 L520 330 L550 440 L470 490 L400 470Z" fill="#28b3bd"/>
<path d="M460 140 L440 215 L600 215 M440 215 L430 290 L520 330 M430 290 L310 320 M385 400 L520 330 M350 330 L520 330" stroke="#a4e4ea" stroke-width="6" fill="none"/>
<path d="M115 385 L240 345 L340 350 L385 420 L380 480 L340 520 L320 560 L325 620 L260 585 L225 545 L250 530 L160 480 Z" fill="#f6b827" stroke="#f6b827" stroke-width="14" stroke-linejoin="round"/>
<path d="M240 345 L300 520 L385 420 M240 345 L160 480 M115 385 L300 520 M240 345 L250 530" stroke="#fde2a0" stroke-width="6" fill="none"/>
<path d="M255 380 L340 355 L380 430 L310 500Z" fill="#f2a81c" opacity="0.6"/>
<path d="M600 235 L660 225 L700 290 L695 380 L640 425 L575 440 L530 350 L575 290 Z" fill="#c5117a" stroke="#c5117a" stroke-width="14" stroke-linejoin="round"/>
<path d="M600 245 L665 235 L690 295 L640 330 L585 290Z" fill="#e0359a"/>
<path d="M665 235 L640 330 L695 380 M640 330 L575 440 M575 290 L640 330 M530 350 L640 330" stroke="#f6a8d8" stroke-width="6" fill="none"/>
<g fill="#e486c4"><ellipse cx="660" cy="175" rx="19" ry="36" transform="rotate(20 660 175)"/><ellipse cx="745" cy="190" rx="30" ry="15" transform="rotate(15 745 190)"/><ellipse cx="790" cy="110" rx="22" ry="30" transform="rotate(35 790 110)"/><ellipse cx="855" cy="132" rx="15" ry="25"/><ellipse cx="755" cy="302" rx="19" ry="36" transform="rotate(-30 755 302)"/></g>
</svg>
<svg class="b" style="left:582px;top:354px;" width="132" height="156" viewBox="0 0 132 156">
<path d="M65.7 2.4 L77.6 12.5 H53.8 Z" fill="#bdbdbd"/>
<path d="M3.3 81.8 L13.5 71.5 V92 Z" fill="#bdbdbd"/>
<path d="M127.3 81.8 L117.5 71.5 V92 Z" fill="#bdbdbd"/>
<rect x="14.2" y="13.3" width="102.6" height="137" rx="4" fill="#fff" stroke="#bdbdbd" stroke-width="3"/>
<g stroke="#fff" stroke-width="1.4"><path d="M62.9 8.7 H68.5 M65.7 5.9 V11.5"/><path d="M6 81.8 H11.6 M8.8 79 V84.6"/><path d="M119 81.8 H124.6 M121.8 79 V84.6"/></g>
<path d="M65.7 12.4 V17" stroke="#555" stroke-width="1.6"/>
</svg>
<svg class="b" style="left:598px;top:370.6px;" width="99.8" height="133.4" viewBox="0 0 99.8 133.4"><rect x="1.1" y="1.1" width="97.6" height="131.2" rx="7" fill="#fff" stroke="#111" stroke-width="2.2"/></svg>
<svg class="b" style="left:612px;top:382px;" width="72" height="76" viewBox="0 0 72 76">
<rect x="32.6" y="58" width="6.5" height="13.7" rx="1" fill="#b5875a"/>
<path d="M35.7 22 Q36.8 22 37.6 23 L65.8 59.5 Q67.2 62.3 64.2 62.3 H7.2 Q4.2 62.3 5.6 59.5 L33.8 23 Q34.6 22 35.7 22Z" fill="#4ea556"/>
<path d="M35.7 4 Q36.8 4 37.5 5 L59.6 37 Q61 40 58 40 H13.4 Q10.4 40 11.8 37 L33.9 5 Q34.6 4 35.7 4Z" fill="#74c27a"/>
<circle cx="38.6" cy="21.9" r="3.2" fill="#fff"/><circle cx="27" cy="31.7" r="1.7" fill="#fff"/><circle cx="29" cy="50.9" r="3.2" fill="#fff"/><circle cx="43.4" cy="46" r="1.7" fill="#fff"/>
</svg>
<span id="t57" class="t" style="left:627.4px;top:467.4px;font-size:19px;line-height:27px;color:#111;font-weight:normal;transform:scaleX(0.9929);">Noël</span>
<div class="b" style="left:638px;top:506.5px;width:19.8px;height:8px;background:#d0112b;"></div>
<svg class="b" style="left:643.9px;top:506.5px;" width="8" height="8" viewBox="0 0 8 8"><path d="M1 4 H7 M4 1 V7" stroke="#fff" stroke-width="1.6"/></svg>
<svg class="b" style="left:836.3px;top:370.6px;" width="115.4" height="133.4" viewBox="0 0 115.4 133.4"><rect x="1.1" y="1.1" width="113.2" height="131.2" rx="7" fill="#fff" stroke="#e4cd70" stroke-width="2.2"/></svg>
<span id="t58" class="t" style="left:848.2px;top:467.4px;font-size:19px;line-height:27px;color:#111;font-weight:normal;transform:scaleX(1.0286);">Nouvel An</span>
<svg class="b" style="left:862px;top:380px;" width="62" height="80" viewBox="0 0 62 80">
<defs>
<linearGradient id="gb" x1="0" x2="1"><stop offset="0" stop-color="#5d8f22"/><stop offset="0.18" stop-color="#a9cb5a"/><stop offset="0.4" stop-color="#86b03a"/><stop offset="0.7" stop-color="#6f9f2a"/><stop offset="1" stop-color="#3f6f16"/></linearGradient>
<linearGradient id="gg" x1="0" x2="1"><stop offset="0" stop-color="#b59a30"/><stop offset="0.35" stop-color="#ecd667"/><stop offset="0.7" stop-color="#d3b640"/><stop offset="1" stop-color="#9a7f22"/></linearGradient>
<linearGradient id="gc" x1="0" x2="1"><stop offset="0" stop-color="#f3d84a"/><stop offset="0.45" stop-color="#fcf08c"/><stop offset="1" stop-color="#eecb3a"/></linearGradient>
</defs>
<path d="M40.3 12 L40.3 20 C40 30 31.4 34 31.4 46 V73.5 Q31.4 76.5 34.4 76.5 H54.1 Q57.1 76.5 57.1 73.5 V46 C57.1 34 48.5 30 48.2 20 V12 Z" fill="url(#gb)"/>
<path d="M38.7 4.4 Q38.7 2.4 41 2.4 H47.5 Q49.8 2.4 49.8 4.4 V9 Q49.8 10.8 48.2 11.4 L48.4 20 C48.6 25 50 28 50.6 30.4 L44.5 35.5 L37.6 30.4 C38.4 28 39.9 25 40.1 20 L40.3 11.4 Q38.7 10.8 38.7 9 Z" fill="url(#gg)"/>
<path d="M5.1 12.4 H28.8 C28.4 24 21.5 44 18.8 56 H15.2 C12.5 44 5.5 24 5.1 12.4Z" fill="#f7f3e6" stroke="#cfc8b0" stroke-width="0.9"/>
<path d="M7 17 H27 V21.8 H7.6Z" fill="#efe8de"/>
<path d="M7.5 21.8 H26.5 C25.2 32 20.4 46 18.2 55.6 H15.8 C13.6 46 8.8 32 7.5 21.8Z" fill="url(#gc)"/>
<path d="M15.3 56 H18.8 V72 H15.3Z" fill="#f6efc0" stroke="#d9cf9a" stroke-width="0.5"/>
<path d="M3.5 75.2 Q3.5 72.4 15.3 71.6 H18.8 Q29.3 72.4 29.3 75.2 Q16.4 78 3.5 75.2Z" fill="#efe8c0" stroke="#c4bb92" stroke-width="0.7"/>
</svg>
<svg class="b" style="left:622.5px;top:544.2px;" width="184.4" height="119.8" viewBox="0 0 184.4 119.8"><rect x="0.85" y="0.85" width="182.7" height="118.1" rx="6.5" fill="#fff" stroke="#4ba350" stroke-width="1.7"/></svg>
<span id="t59" class="t" style="left:635.5px;top:631.8px;font-size:19px;line-height:27px;color:#111;font-weight:normal;transform:scaleX(1.0013);">Organiser le repas</span>
<svg class="b" style="left:676px;top:558px;" width="78" height="60" viewBox="0 0 78 60">
<defs><linearGradient id="gt" x1="0" x2="1"><stop offset="0" stop-color="#cfc6a2"/><stop offset="0.12" stop-color="#efead6"/><stop offset="0.3" stop-color="#e6dfc4"/><stop offset="0.55" stop-color="#d6cca6"/><stop offset="0.72" stop-color="#efe9d3"/><stop offset="0.86" stop-color="#ddd4b2"/><stop offset="1" stop-color="#c9bf98"/></linearGradient></defs>
<path d="M2.2 47.5 C10 59.5 68 59.5 75.8 47.5 L75.8 50 C66 60.5 12 60.5 2.2 50Z" fill="#b9b9b4" opacity="0.8"/>
<path d="M3.8 20.5 C3.8 30 2.4 43 2.4 47.6 C10 58 68 58 75.6 47.6 C75.6 43 74.2 30 74.2 20.5 Z" fill="url(#gt)"/>
<ellipse cx="39" cy="20.6" rx="35.2" ry="7.4" fill="#eee9d6" stroke="#dcd5ba" stroke-width="0.5"/>
<ellipse cx="19.4" cy="18.4" rx="8.4" ry="2.6" fill="#fdfdfb" stroke="#d6d3c6" stroke-width="0.5"/>
<ellipse cx="60" cy="18.4" rx="8.4" ry="2.6" fill="#fdfdfb" stroke="#d6d3c6" stroke-width="0.5"/>
<ellipse cx="42.6" cy="23.6" rx="8.6" ry="2.8" fill="#fdfdfb" stroke="#d6d3c6" stroke-width="0.5"/>
<path d="M8.5 17.5 L18 22 M31 22.5 L37 26 M49.5 21 L56.5 25.5 M63 19.5 L67.5 17.5" stroke="#c0585e" stroke-width="1.5"/>
<g fill="#b04a62" stroke="#c9bfc2" stroke-width="0.5"><path d="M25 2.8 H31.4 L29.6 11.4 H26.8 Z"/><path d="M44.3 3.6 H50.7 L48.9 12 H46.1 Z"/><path d="M34.7 7.2 H40.7 L39.1 14.6 H36.3 Z"/></g>
<g stroke="#bdb6a6" stroke-width="0.9"><path d="M28.2 11.4 V16 M47.5 12 V16.6 M37.7 14.6 V18.6"/></g>
</svg>
<svg class="b" style="left:622.5px;top:671.8px;" width="205.4" height="119.9" viewBox="0 0 205.4 119.9"><rect x="0.9" y="0.9" width="203.6" height="118.1" rx="7" fill="#fff" stroke="#111" stroke-width="1.8"/></svg>
<span id="t60" class="t" style="left:635.5px;top:759.1px;font-size:19px;line-height:27px;color:#111;font-weight:normal;transform:scaleX(0.9982);">Acheter des cadeaux</span>
<svg class="b" style="left:686px;top:677px;" width="80" height="80" viewBox="0 0 80 80">
<g fill="none" stroke="#dcb946" stroke-width="2.6"><path d="M42 16.5 C34 16.5 22 14 23.6 8 C25.4 1.5 37 3 42 16.5Z"/><path d="M42 16.5 C50 16.5 62 14 60.4 8 C58.6 1.5 47 3 42 16.5Z"/></g>
<path d="M14.5 28 H70.2 V55 Q70.2 57.2 68 57.2 H14.5 Z" fill="#c8484c"/>
<path d="M34.2 28 H49.9 V57.2 H34.2Z" fill="#d9b741"/>
<rect x="8.2" y="15.3" width="67.9" height="12.8" rx="2.2" fill="#e96f63"/>
<path d="M34.2 15.3 H49.9 V28.1 H34.2Z" fill="#f0d350"/>
<path d="M1.8 41.7 H44 Q48.2 41.7 48.2 46 Q48.2 50.2 44 50.2 H29 Q25.2 50.2 25.2 53.6 Q25.2 57.2 29 57.2 H68 L72.5 60.5 L33 76.8 L1.8 64 Z" fill="#efdbc9"/>
</svg>
<!-- colour dropdown -->
<div class="b" style="left:497.3px;top:136.2px;width:145.8px;height:208px;background:#fdfdfd;border:1px solid #c3c3c3;box-shadow:2px 2px 2px rgba(0,0,0,0.22);"></div>
<div class="b" style="left:503.3px;top:140.7px;width:14.8px;height:14.6px;background:#000;"></div>
<span id="t61" class="t" style="left:531px;top:140.5px;font-size:12px;line-height:17px;color:#444;font-weight:normal;transform:scaleX(0.9482);">Automatique</span>
<div class="b" style="left:498.3px;top:159.4px;width:143.8px;height:1px;background:#e6e6e6;"></div>
<div class="b" style="left:499.8px;top:162px;width:12px;height:12px;background:#5b5b66;border:1px solid rgba(0,0,0,0.10);"></div>
<div class="b" style="left:515.86px;top:162px;width:12px;height:12px;background:#16b438;border:1px solid rgba(0,0,0,0.10);"></div>
<div class="b" style="left:531.92px;top:162px;width:12px;height:12px;background:#15b0a8;border:1px solid rgba(0,0,0,0.10);"></div>
<div class="b" style="left:547.98px;top:162px;width:12px;height:12px;background:#1469a5;border:1px solid rgba(0,0,0,0.10);"></div>
<div class="b" style="left:564.04px;top:162px;width:12px;height:12px;background:#4848bc;border:1px solid rgba(0,0,0,0.10);"></div>
<div class="b" style="left:580.1px;top:162px;width:12px;height:12px;background:#b01414;border:1px solid rgba(0,0,0,0.10);"></div>
<div class="b" style="left:596.16px;top:162px;width:12px;height:12px;background:#dc1456;border:1px solid rgba(0,0,0,0.10);"></div>
<div class="b" style="left:612.22px;top:162px;width:12px;height:12px;background:#f8641e;border:1px solid rgba(0,0,0,0.10);"></div>
<div class="b" style="left:628.28px;top:162px;width:12px;height:12px;background:#fbba1c;border:1px solid rgba(0,0,0,0.10);"></div>
<div class="b" style="left:499.8px;top:178px;width:12px;height:12px;background:#7e7e8a;border:1px solid rgba(0,0,0,0.10);"></div>
<div class="b" style="left:515.86px;top:178px;width:12px;height:12px;background:#55cf65;border:1px solid rgba(0,0,0,0.10);"></div>
<div class="b" style="left:531.92px;top:178px;width:12px;height:12px;background:#50dcc0;border:1px solid rgba(0,0,0,0.10);"></div>
<div class="b" style="left:547.98px;top:178px;width:12px;height:12px;background:#50a8e0;border:1px solid rgba(0,0,0,0.10);"></div>
<div class="b" style="left:564.04px;top:178px;width:12px;height:12px;background:#6e6ee6;border:1px solid rgba(0,0,0,0.10);"></div>
<div class="b" style="left:580.1px;top:178px;width:12px;height:12px;background:#e65555;border:1px solid rgba(0,0,0,0.10);"></div>
<div class="b" style="left:596.16px;top:178px;width:12px;height:12px;background:#f8588c;border:1px solid rgba(0,0,0,0.10);"></div>
<div class="b" style="left:612.22px;top:178px;width:12px;height:12px;background:#f88c5a;border:1px solid rgba(0,0,0,0.10);"></div>
<div class="b" style="left:628.28px;top:178px;width:12px;height:12px;background:#fccb5a;border:1px solid rgba(0,0,0,0.10);"></div>
<div class="b" style="left:499.8px;top:194px;width:12px;height:12px;background:#a3a3af;border:1px solid rgba(0,0,0,0.10);"></div>
<div class="b" style="left:515.86px;top:194px;width:12px;height:12px;background:#93ee9b;border:1px solid rgba(0,0,0,0.10);"></div>
<div class="b" style="left:531.92px;top:194px;width:12px;height:12px;background:#93f0e0;border:1px solid rgba(0,0,0,0.10);"></div>
<div class="b" style="left:547.98px;top:194px;width:12px;height:12px;background:#93cff3;border:1px solid rgba(0,0,0,0.10);"></div>
<div class="b" style="left:564.04px;top:194px;width:12px;height:12px;background:#9898f4;border:1px solid rgba(0,0,0,0.10);"></div>
<div class="b" style="left:580.1px;top:194px;width:12px;height:12px;background:#f59494;border:1px solid rgba(0,0,0,0.10);"></div>
<div class="b" style="left:596.16px;top:194px;width:12px;height:12px;background:#f7a0bb;border:1px solid rgba(0,0,0,0.10);"></div>
<div class="b" style="left:612.22px;top:194px;width:12px;height:12px;background:#f7b596;border:1px solid rgba(0,0,0,0.10);"></div>
<div class="b" style="left:628.28px;top:194px;width:12px;height:12px;background:#f8dc94;border:1px solid rgba(0,0,0,0.10);"></div>
<div class="b" style="left:499.8px;top:210px;width:12px;height:12px;background:#c8c8d4;border:1px solid rgba(0,0,0,0.12);"></div>
<div class="b" style="left:515.86px;top:210px;width:12px;height:12px;background:#c0f3c5;border:1px solid rgba(0,0,0,0.12);"></div>
<div class="b" style="left:531.92px;top:210px;width:12px;height:12px;background:#b9f5ea;border:1px solid rgba(0,0,0,0.12);"></div>
<div class="b" style="left:547.98px;top:210px;width:12px;height:12px;background:#bde2f8;border:1px solid rgba(0,0,0,0.12);"></div>
<div class="b" style="left:564.04px;top:210px;width:12px;height:12px;background:#bfbff8;border:1px solid rgba(0,0,0,0.12);"></div>
<div class="b" style="left:580.1px;top:210px;width:12px;height:12px;background:#f9bec2;border:1px solid rgba(0,0,0,0.12);"></div>
<div class="b" style="left:596.16px;top:210px;width:12px;height:12px;background:#f9bdd3;border:1px solid rgba(0,0,0,0.12);"></div>
<div class="b" style="left:612.22px;top:210px;width:12px;height:12px;background:#fbd3bf;border:1px solid rgba(0,0,0,0.12);"></div>
<div class="b" style="left:628.28px;top:210px;width:12px;height:12px;background:#fbe9bd;border:1px solid rgba(0,0,0,0.12);"></div>
<div class="b" style="left:499.8px;top:226px;width:12px;height:12px;background:#e9e9f5;border:1px solid rgba(0,0,0,0.13);"></div>
<div class="b" style="left:515.86px;top:226px;width:12px;height:12px;background:#e6fbe7;border:1px solid rgba(0,0,0,0.13);"></div>
<div class="b" style="left:531.92px;top:226px;width:12px;height:12px;background:#e4fdfb;border:1px solid rgba(0,0,0,0.13);"></div>
<div class="b" style="left:547.98px;top:226px;width:12px;height:12px;background:#e5f5fd;border:1px solid rgba(0,0,0,0.13);"></div>
<div class="b" style="left:564.04px;top:226px;width:12px;height:12px;background:#e8e7fd;border:1px solid rgba(0,0,0,0.13);"></div>
<div class="b" style="left:580.1px;top:226px;width:12px;height:12px;background:#fde6e6;border:1px solid rgba(0,0,0,0.13);"></div>
<div class="b" style="left:596.16px;top:226px;width:12px;height:12px;background:#fde6ef;border:1px solid rgba(0,0,0,0.13);"></div>
<div class="b" style="left:612.22px;top:226px;width:12px;height:12px;background:#fdeee6;border:1px solid rgba(0,0,0,0.13);"></div>
<div class="b" style="left:628.28px;top:226px;width:12px;height:12px;background:#fef7e5;border:1px solid rgba(0,0,0,0.13);"></div>
<div class="b" style="left:499.1px;top:241.3px;width:13.2px;height:13.2px;background:#f0853c;"></div>
<div class="b" style="left:500.5px;top:242.7px;width:10.4px;height:10.4px;background:#000;"></div>
<div class="b" style="left:515.7px;top:242px;width:12.2px;height:12px;background:#fff;border:1px solid #d6d6d6;"></div>
<div class="b" style="left:498.3px;top:257.2px;width:143.8px;height:19.7px;background:#ebebeb;"></div>
<span id="t62" class="t" style="left:510px;top:259.2px;font-size:12px;line-height:17px;color:#3a3a3a;font-weight:bold;transform:scaleX(0.9236);">Couleurs de ligne</span>
<div class="b" style="left:499.8px;top:280.3px;width:12.2px;height:12px;background:#43a047;"></div>
<div class="b" style="left:515.2px;top:279.7px;width:13.2px;height:13.2px;background:#f0853c;"></div>
<div class="b" style="left:516.6px;top:281.1px;width:10.4px;height:10.4px;background:#000;"></div>
<div class="b" style="left:531.6px;top:280.3px;width:12.4px;height:12px;background:#e6cf60;"></div>
<div class="b" style="left:498.3px;top:298px;width:143.8px;height:1px;background:#e2e2e2;"></div>
<svg class="b" style="left:503px;top:302px;" width="15" height="15" viewBox="0 0 15 15"><g transform="translate(7.5 7.5)">
<path d="M0 0 L0 -7 A7 7 0 0 1 6.66 -2.16 Z" fill="#f2cf70"/>
<path d="M0 0 L6.66 -2.16 A7 7 0 0 1 4.11 5.66 Z" fill="#6f9e7c"/>
<path d="M0 0 L4.11 5.66 A7 7 0 0 1 -4.11 5.66 Z" fill="#4b8fcf"/>
<path d="M0 0 L-4.11 5.66 A7 7 0 0 1 -6.66 -2.16 Z" fill="#dc6245"/>
<path d="M0 0 L-6.66 -2.16 A7 7 0 0 1 0 -7 Z" fill="#f0a04a"/>
<g stroke="#fdfdfd" stroke-width="0.7"><path d="M0 0 L0 -7 M0 0 L6.66 -2.16 M0 0 L4.11 5.66 M0 0 L-4.11 5.66 M0 0 L-6.66 -2.16"/></g></g></svg>
<span id="t63" class="t" style="left:531px;top:302.7px;font-size:12px;line-height:17px;color:#444;font-weight:normal;transform:scaleX(0.8910);">Autres couleurs...</span>
<svg class="b" style="left:502px;top:323.5px;" width="18" height="17" viewBox="0 0 18 17"><path d="M9.8 5.4 L12.8 8.4 L5.2 16 H2 V12.8 Z" fill="#fdfdfd" stroke="#3c3c3c" stroke-width="1.2" stroke-linejoin="round"/>
<path d="M8 4.2 L13.8 10 L15.6 8.2 L14.2 6.8 L17 3.4 Q17.8 1.4 16.2 0.6 Q14.6 0 13.4 1.2 L10.6 4 L9.6 2.8 Z" fill="#2e2e2e"/></svg>
<span id="t64" class="t" style="left:531px;top:324.5px;font-size:12px;line-height:17px;color:#444;font-weight:normal;transform:scaleX(0.8683);">Prélever</span>
<!-- document tabs -->
<div class="b" style="left:0px;top:810.7px;width:1565.6px;height:24px;background:#e5e5e5;border-top:1px solid #cdcdcd;border-bottom:1px solid #d2d2d2;"></div>
<svg class="b" style="left:0px;top:810px;" width="460" height="24" viewBox="0 0 460 24">
<path d="M12.5 1.2 H208.5 L227.5 21 H32.5 Z" fill="#f1f1f1" stroke="#bdbdbd" stroke-width="1"/>
<path d="M211 0.5 H439.5 V21.3 H230.5 Z" fill="#fff"/>
<path d="M211 1 L230.5 21.3 H439.5 V1" fill="none" stroke="#d0d0d0" stroke-width="1"/>
<path d="M7.6 7.5 L2.6 11.8 L7.6 16 Z" fill="none" stroke="#8a8a8a" stroke-width="1.1"/>
</svg>
<svg class="b" style="left:40.8px;top:813px;" width="13.4" height="16" viewBox="0 0 13.4 16"><path d="M0.8 1.6 Q0.8 0.4 2 0.4 H8.4 L13 4.8 V14.6 Q13 15.8 11.8 15.8 H2 Q0.8 15.8 0.8 14.6 Z" fill="#3c57b8"/><path d="M8.4 0.4 V4.8 H13Z" fill="#8fa3e6"/><path d="M2.8 13.6 V7.2 L6.9 10.6 L11 7.2 V13.6 H9 V10.6 L6.9 12.6 L4.8 10.6 V13.6Z" fill="#e9edfb"/></svg>
<span id="t65" class="t" style="left:72px;top:814.4px;font-size:12px;line-height:17px;color:#444;font-weight:normal;transform:scaleX(0.9280);">Activité/To do list Guillaume*</span>
<svg class="b" style="left:239.3px;top:813px;" width="13.4" height="16" viewBox="0 0 13.4 16"><path d="M0.8 1.6 Q0.8 0.4 2 0.4 H8.4 L13 4.8 V14.6 Q13 15.8 11.8 15.8 H2 Q0.8 15.8 0.8 14.6 Z" fill="#3c57b8"/><path d="M8.4 0.4 V4.8 H13Z" fill="#8fa3e6"/><path d="M2.8 13.6 V7.2 L6.9 10.6 L11 7.2 V13.6 H9 V10.6 L6.9 12.6 L4.8 10.6 V13.6Z" fill="#e9edfb"/></svg>
<span id="t66" class="t" style="left:264px;top:814.4px;font-size:12px;line-height:17px;color:#333;font-weight:bold;transform:scaleX(0.9240);">Organisation Fêtes 2023*</span>
<svg class="b" style="left:408.5px;top:818px;" width="8" height="8" viewBox="0 0 8 8"><path d="M0.8 6 V0.8 H6" fill="none" stroke="#777" stroke-width="1.1"/><path d="M3 3 L7 7 M7 3.8 V7 H3.8" fill="none" stroke="#777" stroke-width="1.1"/></svg>
<svg class="b" style="left:426.5px;top:817.8px;" width="8" height="8" viewBox="0 0 8 8"><path d="M0.8 0.8 L7.2 7.2 M7.2 0.8 L0.8 7.2" stroke="#444" stroke-width="1.3"/></svg>
<svg class="b" style="left:1551px;top:817.5px;" width="7" height="10" viewBox="0 0 7 10"><path d="M1 1 L5.6 4.6 L1 8.6 Z" fill="none" stroke="#8a8a8a" stroke-width="1.1"/></svg>
<!-- status bar -->
<svg class="b" style="left:1110.5px;top:839.5px;" width="15" height="15" viewBox="0 0 15 15"><path d="M0.5 1 H14.5 L9.2 7.6 V14.2 L5.8 12.2 V7.6 Z" fill="#606060"/></svg>
<svg class="b" style="left:1128.3px;top:845.5px;" width="5" height="3" viewBox="0 0 5 3"><path d="M0 0 H5 L2.5 3 Z" fill="#444"/></svg>
<svg class="b" style="left:1141.5px;top:839.5px;" width="17" height="15" viewBox="0 0 17 15"><path d="M0.5 1 H14.5 L9.2 7.6 V14.2 L5.8 12.2 V7.6 Z" fill="#606060"/><path d="M13.4 5.6 L10 10.4 H12.6 L11 14.6 L16.2 8.8 H13.2 L15.2 5.6Z" fill="#606060" stroke="#f0f0f0" stroke-width="0.6"/></svg>
<svg class="b" style="left:1159.6px;top:845.5px;" width="5" height="3" viewBox="0 0 5 3"><path d="M0 0 H5 L2.5 3 Z" fill="#444"/></svg>
<svg class="b" style="left:1179.5px;top:838.5px;" width="17" height="17" viewBox="0 0 17 17"><circle cx="8.4" cy="9" r="6.4" fill="none" stroke="#606060" stroke-width="1.6"/><path d="M5 9 H11.8 M8.4 5.6 V12.4" stroke="#606060" stroke-width="1.6"/><path d="M4.6 0.8 L9.2 2.4 L5.4 5.4Z" fill="#606060"/></svg>
<svg class="b" style="left:1199.2px;top:845.5px;" width="5" height="3" viewBox="0 0 5 3"><path d="M0 0 H5 L2.5 3 Z" fill="#444"/></svg>
<svg class="b" style="left:1211.5px;top:839px;" width="16" height="16" viewBox="0 0 16 16"><rect x="0.7" y="0.7" width="14.6" height="14.6" rx="1.5" fill="#f6f6f6" stroke="#cfcfcf" stroke-width="1"/><g fill="#d2d2d2"><circle cx="8" cy="8" r="1.7"/><path d="M3 3 L6 4 L4 6Z M13 3 L10 4 L12 6Z M3 13 L6 12 L4 10Z M13 13 L10 12 L12 10Z"/></g></svg>
<svg class="b" style="left:1234.5px;top:839px;" width="16.5" height="16" viewBox="0 0 16.5 16"><rect x="0.8" y="0.8" width="14.9" height="14.4" rx="2" fill="#fafafa" stroke="#606060" stroke-width="1.3"/><path d="M3.6 4.6 H11.6 M3.6 7.4 H9 M3.6 10.2 H10.4 M3.6 12.6 H7.6" stroke="#8a8a8a" stroke-width="1"/></svg>
<svg class="b" style="left:1259px;top:839px;" width="17" height="16" viewBox="0 0 17 16"><rect x="0.8" y="0.8" width="15.4" height="14.4" rx="1.6" fill="#fafafa" stroke="#606060" stroke-width="1.3"/><rect x="0.8" y="0.8" width="15.4" height="4.4" fill="#606060"/><text x="8.5" y="13.4" font-size="7.5" font-weight="bold" fill="#606060" text-anchor="middle" font-family="Liberation Sans, sans-serif">24</text></svg>
<svg class="b" style="left:1284px;top:839px;" width="16.5" height="16" viewBox="0 0 16.5 16"><rect x="0.8" y="0.8" width="14.9" height="14.4" rx="2" fill="#fafafa" stroke="#606060" stroke-width="1.3"/><rect x="3" y="3" width="6.4" height="6.4" rx="1" fill="#606060"/><circle cx="10.4" cy="10.4" r="3.5" fill="#fafafa" stroke="#606060" stroke-width="1.5"/><path d="M8.8 10.4 L10 11.6 L12.2 9.2" stroke="#606060" stroke-width="1" fill="none"/></svg>
<svg class="b" style="left:1309px;top:839px;" width="16.5" height="16" viewBox="0 0 16.5 16"><rect x="0.8" y="0.8" width="14.9" height="14.4" rx="2" fill="#fafafa" stroke="#606060" stroke-width="1.3"/><path d="M8.6 3.2 H13 V7.6 L7.4 13.2 L3 8.8 Z" fill="#606060"/><circle cx="11" cy="5.4" r="0.9" fill="#fafafa"/><path d="M4 12.6 L12.8 3.6" stroke="#fafafa" stroke-width="0.7"/></svg>
<svg class="b" style="left:1333.5px;top:839px;" width="17" height="16" viewBox="0 0 17 16"><rect x="0.8" y="0.8" width="15.4" height="14.4" fill="#fafafa" stroke="#606060" stroke-width="1.3"/><rect x="0.8" y="0.8" width="15.4" height="3" fill="#606060"/><path d="M4.2 3.8 V15 M0.8 7 H4.2 M0.8 10 H4.2 M0.8 13 H4.2" stroke="#606060" stroke-width="1"/><path d="M6.4 6.4 H13.6 V8.4 H6.4Z" fill="#606060"/><path d="M9 9 L13.8 13.6 M13.8 10.4 V13.6 H10.6" stroke="#606060" stroke-width="1.2" fill="none"/></svg>
<span id="t67" class="t" style="left:1361px;top:838.9px;font-size:12px;line-height:17px;color:#444;font-weight:normal;transform:scaleX(0.8962);">102 %</span>
<div class="b" style="left:1407px;top:846.3px;width:7.8px;height:1.1px;background:#777;"></div>
<div class="b" style="left:1425.7px;top:846.4px;width:84.5px;height:1px;background:#b9b9b9;"></div>
<div class="b" style="left:1466px;top:838.4px;width:4.8px;height:15.6px;background:#f4f4f4;border:1px solid #9a9a9a;"></div>
<svg class="b" style="left:1522.5px;top:843px;" width="8" height="8" viewBox="0 0 8 8"><path d="M0 4 H8 M4 0 V8" stroke="#777" stroke-width="1.1"/></svg>
<svg class="b" style="left:1540.5px;top:839.5px;" width="14.5" height="14.5" viewBox="0 0 14.5 14.5"><rect x="0.7" y="0.7" width="13" height="13" rx="1" fill="#fafafa" stroke="#606060" stroke-width="1.2"/><g fill="#606060"><circle cx="7.2" cy="7.2" r="1.4"/><path d="M2.6 2.6 L5.6 3.6 L3.6 5.6Z M11.8 2.6 L8.8 3.6 L10.8 5.6Z M2.6 11.8 L5.6 10.8 L3.6 8.8Z M11.8 11.8 L8.8 10.8 L10.8 8.8Z"/></g></svg>
<svg class="b" style="left:1570.5px;top:839.5px;" width="15" height="15" viewBox="0 0 15 15"><path d="M0.8 0.8 H13.8 V7 H11.6 V14 H0.8Z" fill="#606060"/><path d="M9 3.4 H11.6 V14" stroke="#f0f0f0" stroke-width="1" fill="none"/></svg>
<svg class="b" style="left:1588.6px;top:845.5px;" width="5" height="3" viewBox="0 0 5 3"><path d="M0 0 H5 L2.5 3 Z" fill="#444"/></svg>
<!-- right sidebar -->
<div class="b" style="left:1567.8px;top:164px;width:28.2px;height:670px;background:#f0f0f0;"></div>
<svg class="b" style="left:1567.8px;top:175.9px;" width="28.2" height="30.4" viewBox="0 0 28.2 30.4"><path d="M0 0 H20.7 L28.2 7.5 V30.4 H0Z" fill="#ebebeb"/><path d="M0 0.5 H20.7 L28.2 8" fill="none" stroke="#cfcfcf" stroke-width="1"/></svg>
<svg class="b" style="left:1567.8px;top:206.26px;" width="28.2" height="30.4" viewBox="0 0 28.2 30.4"><path d="M0 0 H20.7 L28.2 7.5 V30.4 H0Z" fill="#ebebeb"/><path d="M0 0.5 H20.7 L28.2 8" fill="none" stroke="#cfcfcf" stroke-width="1"/></svg>
<svg class="b" style="left:1567.8px;top:236.62px;" width="28.2" height="30.4" viewBox="0 0 28.2 30.4"><path d="M0 0 H20.7 L28.2 7.5 V30.4 H0Z" fill="#ebebeb"/><path d="M0 0.5 H20.7 L28.2 8" fill="none" stroke="#cfcfcf" stroke-width="1"/></svg>
<svg class="b" style="left:1567.8px;top:266.98px;" width="28.2" height="30.4" viewBox="0 0 28.2 30.4"><path d="M0 0 H20.7 L28.2 7.5 V30.4 H0Z" fill="#ebebeb"/><path d="M0 0.5 H20.7 L28.2 8" fill="none" stroke="#cfcfcf" stroke-width="1"/></svg>
<svg class="b" style="left:1567.8px;top:297.34px;" width="28.2" height="30.4" viewBox="0 0 28.2 30.4"><path d="M0 0 H20.7 L28.2 7.5 V30.4 H0Z" fill="#ebebeb"/><path d="M0 0.5 H20.7 L28.2 8" fill="none" stroke="#cfcfcf" stroke-width="1"/></svg>
<svg class="b" style="left:1567.8px;top:327.7px;" width="28.2" height="30.4" viewBox="0 0 28.2 30.4"><path d="M0 0 H20.7 L28.2 7.5 V30.4 H0Z" fill="#ebebeb"/><path d="M0 0.5 H20.7 L28.2 8" fill="none" stroke="#cfcfcf" stroke-width="1"/></svg>
<svg class="b" style="left:1567.8px;top:358.06px;" width="28.2" height="30.4" viewBox="0 0 28.2 30.4"><path d="M0 0 H20.7 L28.2 7.5 V30.4 H0Z" fill="#ebebeb"/><path d="M0 0.5 H20.7 L28.2 8" fill="none" stroke="#cfcfcf" stroke-width="1"/></svg>
<svg class="b" style="left:1567.8px;top:388.42px;" width="28.2" height="30.4" viewBox="0 0 28.2 30.4"><path d="M0 0 H20.7 L28.2 7.5 V30.4 H0Z" fill="#ebebeb"/><path d="M0 0.5 H20.7 L28.2 8" fill="none" stroke="#cfcfcf" stroke-width="1"/></svg>
<svg class="b" style="left:1567.8px;top:418.78px;" width="28.2" height="30.4" viewBox="0 0 28.2 30.4"><path d="M0 0 H20.7 L28.2 7.5 V30.4 H0Z" fill="#ebebeb"/><path d="M0 0.5 H20.7 L28.2 8" fill="none" stroke="#cfcfcf" stroke-width="1"/></svg>
<svg class="b" style="left:1567.8px;top:449.14px;" width="28.2" height="30.4" viewBox="0 0 28.2 30.4"><path d="M0 0 H20.7 L28.2 7.5 V30.4 H0Z" fill="#ebebeb"/><path d="M0 0.5 H20.7 L28.2 8" fill="none" stroke="#cfcfcf" stroke-width="1"/></svg>
<svg class="b" style="left:1567.8px;top:479.5px;" width="28.2" height="30.4" viewBox="0 0 28.2 30.4"><path d="M0 0 H20.7 L28.2 7.5 V30.4 H0Z" fill="#ebebeb"/><path d="M0 0.5 H20.7 L28.2 8" fill="none" stroke="#cfcfcf" stroke-width="1"/></svg>
<svg class="b" style="left:1567.8px;top:509.86px;" width="28.2" height="30.4" viewBox="0 0 28.2 30.4"><path d="M0 0 H20.7 L28.2 7.5 V30.4 H0Z" fill="#ebebeb"/><path d="M0 0.5 H20.7 L28.2 8" fill="none" stroke="#cfcfcf" stroke-width="1"/></svg>
<div class="b" style="left:1567.8px;top:540.2px;width:28.2px;height:1px;background:#cfcfcf;"></div>
<svg class="b" style="left:1573.8px;top:183px;" width="16" height="16" viewBox="0 0 16 16"><path d="M0.6 0.6 H6 L7.6 3 H15.4 V15 H0.6Z" fill="#2f4ea0"/><path d="M3.6 6.6 L7 9.6 L3.6 12.6Z M11.4 6.6 V12.6 H9.4 V8.4 L8 9.6 Z" fill="#fff"/><rect x="2.2" y="5.6" width="11.6" height="8" fill="none" stroke="#cfd8f2" stroke-width="0.6"/></svg>
<svg class="b" style="left:1573.8px;top:213.36px;" width="17" height="17" viewBox="0 0 17 17"><rect x="0.6" y="0.8" width="9.6" height="9.6" rx="1.8" fill="#c6283c"/><path d="M4.8 3 V8 M3.8 3.8 L4.8 3" stroke="#fff" stroke-width="1.3" fill="none"/><circle cx="11" cy="11" r="5.2" fill="#48a84f" stroke="#ebebeb" stroke-width="1"/><path d="M8.6 11 L10.4 12.8 L13.6 9.2" stroke="#fff" stroke-width="1.4" fill="none"/></svg>
<svg class="b" style="left:1573.8px;top:243.72px;" width="17" height="17" viewBox="0 0 17 17"><rect x="0.8" y="2" width="14" height="12.4" rx="1.6" fill="#fafafa" stroke="#8a8a8a" stroke-width="1.1"/><path d="M0.8 5.4 V3.6 Q0.8 2 2.4 2 H13.2 Q14.8 2 14.8 3.6 V5.4Z" fill="#e8963c"/><path d="M4 0.6 V3.4 M11.6 0.6 V3.4" stroke="#8a8a8a" stroke-width="1.2"/><path d="M4 9.6 L6 11.6 L9.4 7.8" stroke="#48a84f" stroke-width="1.4" fill="none"/><path d="M10.6 13.4 H16 M13.3 10.7 V16.1" stroke="#48a84f" stroke-width="1.3"/></svg>
<svg class="b" style="left:1573.8px;top:274.08px;" width="16" height="16" viewBox="0 0 16 16"><circle cx="8" cy="3.6" r="2.8" fill="none" stroke="#8a8a8a" stroke-width="1.2"/><path d="M0.9 15.2 C0.9 10 4 7.2 8 7.2 C12 7.2 15.1 10 15.1 15.2Z" fill="none" stroke="#8a8a8a" stroke-width="1.2"/></svg>
<svg class="b" style="left:1573.8px;top:304.44px;" width="17" height="17" viewBox="0 0 17 17"><path d="M6 7.4 H8.4 M11 3.4 H9.8 Q8.4 3.4 8.4 4.8 V10 Q8.4 11.4 9.8 11.4 H10.4 M8.4 7.4 H11" fill="none" stroke="#8a8a8a" stroke-width="1"/><rect x="0.6" y="5.4" width="6.4" height="4" rx="2" fill="#f6f6f6" stroke="#8a8a8a" stroke-width="1"/><rect x="11" y="1.8" width="4.6" height="3" rx="1.5" fill="#f6f6f6" stroke="#8a8a8a" stroke-width="0.9"/><rect x="11" y="6" width="4.6" height="3" rx="1.5" fill="#f6f6f6" stroke="#8a8a8a" stroke-width="0.9"/><path d="M10.2 13.4 H15.6 M12.9 10.7 V16.1" stroke="#48a84f" stroke-width="1.3"/></svg>
<svg class="b" style="left:1573.8px;top:334.3px;" width="17" height="18" viewBox="0 0 17 18"><rect x="3.4" y="3.4" width="11.4" height="12" rx="1.4" fill="#f6f6f6" stroke="#8a8a8a" stroke-width="1"/><rect x="0.8" y="0.8" width="11.6" height="12" rx="1.4" fill="#5e9ee0" stroke="#3f78c4" stroke-width="1"/><path d="M1.4 12 L5.4 6.6 L8 9.6 L9.4 8.2 L12 12Z" fill="#9aa0a8"/><circle cx="9.6" cy="4" r="1.2" fill="#f0f0f0"/><path d="M10.6 14.6 H16 M13.3 11.9 V17.3" stroke="#48a84f" stroke-width="1.3"/></svg>
<svg class="b" style="left:1573.8px;top:365.16px;" width="16" height="16" viewBox="0 0 16 16"><circle cx="6.4" cy="6.4" r="5" fill="#fafafa" stroke="#8a8a8a" stroke-width="1.5"/><path d="M10.2 10.2 L14.6 14.6" stroke="#777" stroke-width="2.4" stroke-linecap="round"/></svg>
<svg class="b" style="left:1573.8px;top:395.52px;" width="16" height="16" viewBox="0 0 16 16"><rect x="0.4" y="0.4" width="15.2" height="15.2" rx="2.4" fill="#3c57b8"/><path d="M3 6 V3 H6 M10 3 H13 V6 M13 10 V13 H10 M6 13 H3 V10" fill="none" stroke="#fff" stroke-width="1.2"/><path d="M5.4 5.6 L7.8 8 L5.4 10.4Z M10.6 5.6 V10.4 H9.2 V7 L8.2 8Z" fill="#fff"/></svg>
<svg class="b" style="left:1573.8px;top:425.88px;" width="17" height="16" viewBox="0 0 17 16"><rect x="0.8" y="0.8" width="9.6" height="8" rx="1.4" fill="#f6f6f6" stroke="#8a8a8a" stroke-width="1"/><rect x="3.6" y="5.2" width="12.4" height="9.6" rx="1.6" fill="#fafafa" stroke="#4a84d0" stroke-width="1.2"/><rect x="6.6" y="8.8" width="6.4" height="2.4" fill="#4a84d0"/></svg>
<svg class="b" style="left:1573.8px;top:456.24px;" width="17" height="16" viewBox="0 0 17 16"><rect x="7.6" y="3.4" width="8.8" height="8.6" fill="#fafafa" stroke="#1470c8" stroke-width="1"/><path d="M9.4 7 L11.4 9 L15 5.2" stroke="#1470c8" stroke-width="1.1" fill="none"/><path d="M0.4 2 L9.6 0.2 V15.8 L0.4 14Z" fill="#0f6cc4"/><ellipse cx="5" cy="8" rx="2" ry="2.5" fill="none" stroke="#fff" stroke-width="1.2"/></svg>
<svg class="b" style="left:1573.8px;top:486.6px;" width="16" height="16" viewBox="0 0 16 16"><circle cx="8" cy="8" r="7.2" fill="#8e8e8e"/><g fill="none" stroke="#d2d2d2" stroke-width="0.7"><ellipse cx="8" cy="8" rx="3.2" ry="7.2"/><path d="M8 0.8 V15.2 M0.8 8 H15.2 M1.8 4.4 H14.2 M1.8 11.6 H14.2"/></g></svg>
<svg class="b" style="left:1573.8px;top:516.96px;" width="17" height="16" viewBox="0 0 17 16"><g stroke="#6a9c2a" stroke-width="1.2" stroke-dasharray="1.2 1"><path d="M10.6 2.6 V13.6 M12.6 2.6 V13.6 M14.6 2.6 V13.6"/></g><path d="M0.4 2 L9.6 0.2 V15.8 L0.4 14Z" fill="#5a9220"/><path d="M2.8 5 L7.2 11 M7.2 5 L2.8 11" stroke="#fff" stroke-width="1.4"/></svg>
</body></html>
